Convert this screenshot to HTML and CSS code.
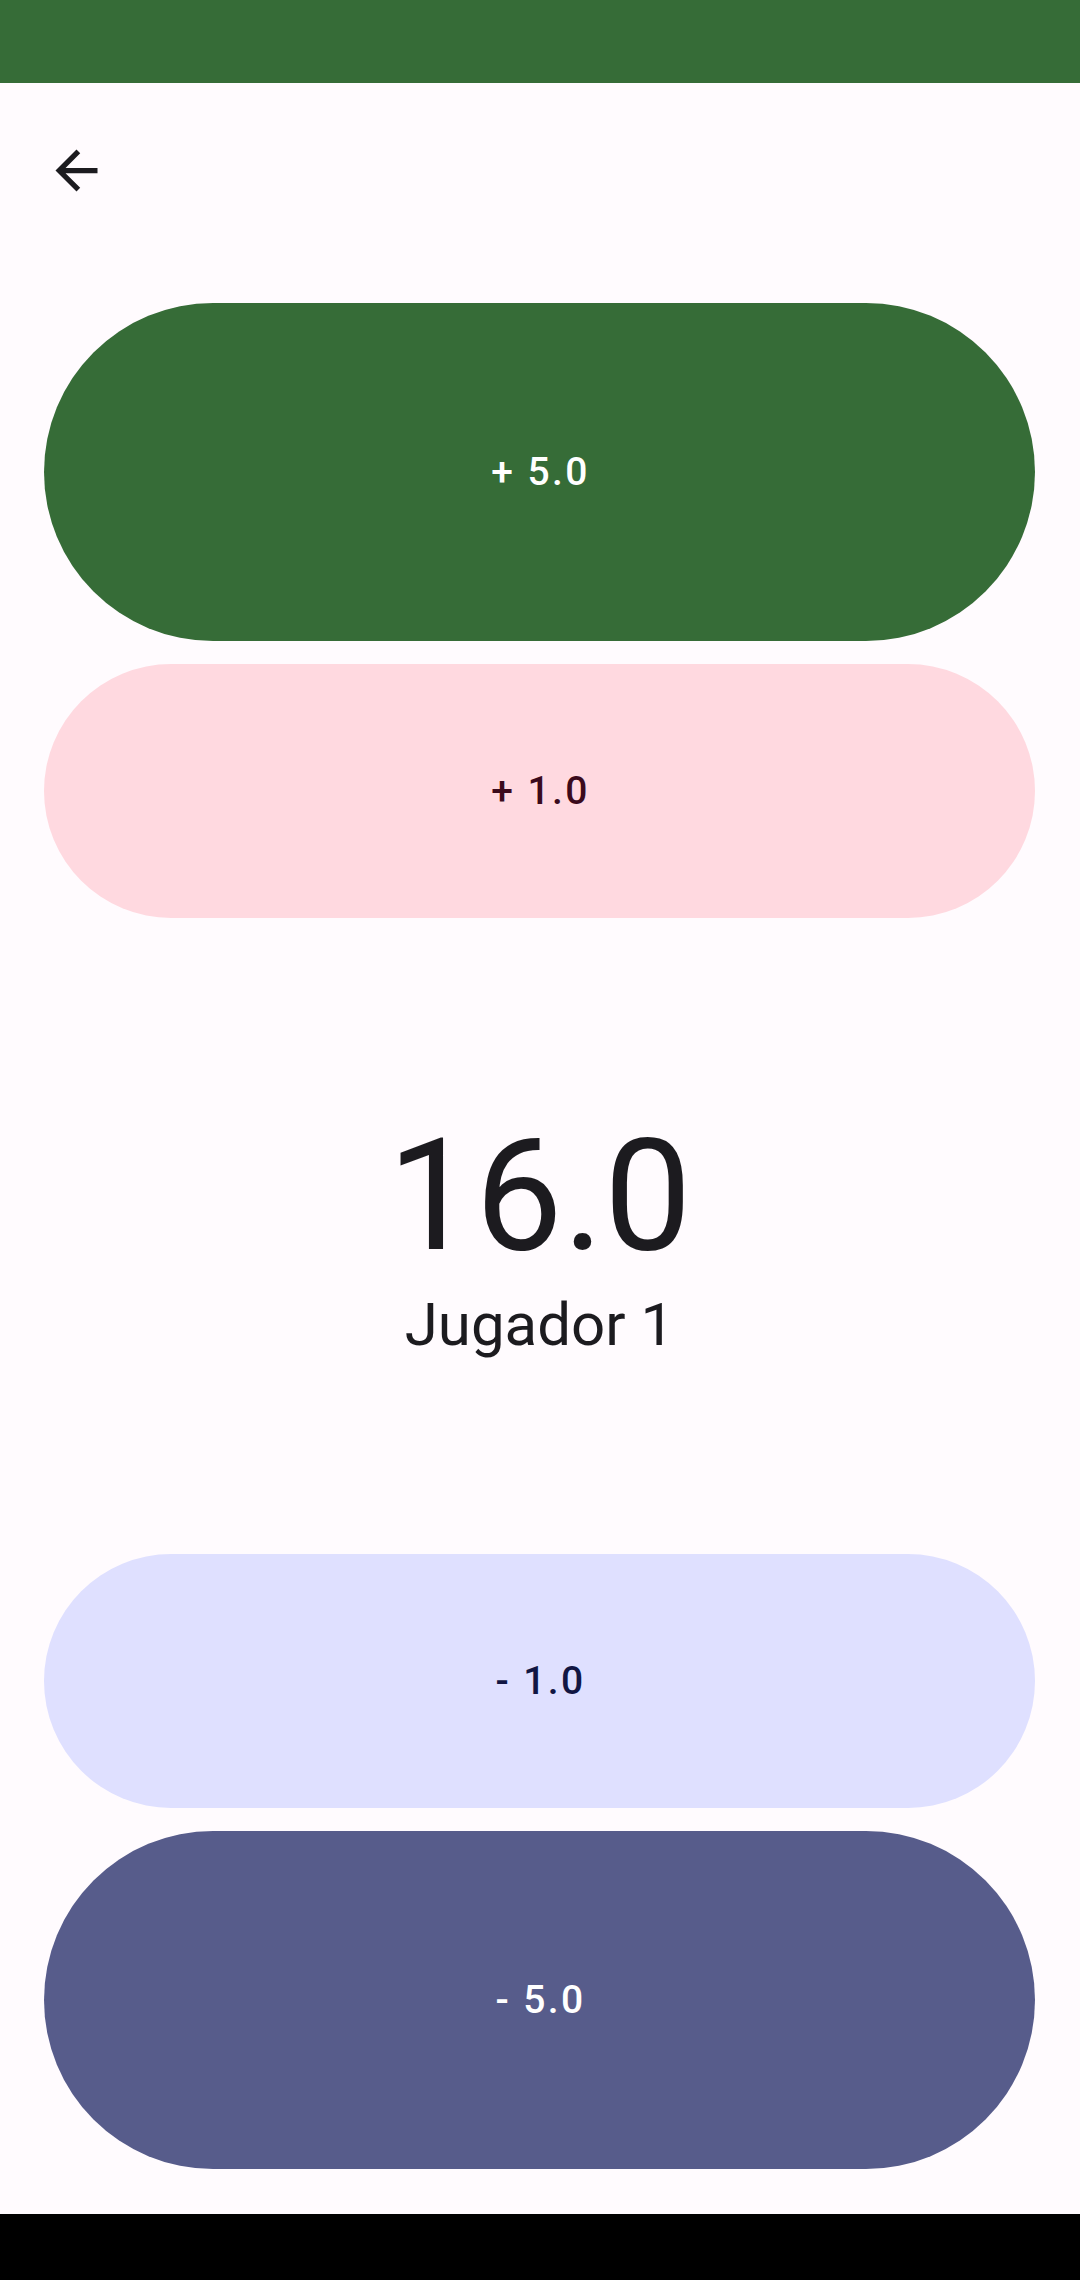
FILE: index.html
```html
<!DOCTYPE html>
<html lang="es">
<head>
<meta charset="utf-8">
<title>Jugador 1</title>
<link rel="stylesheet" href="styles.css">
</head>
<body>
<div class="screen">
  <div class="status"></div>
  <div class="topbar">
    <svg class="back" viewBox="0 0 24 24" width="63" height="63"><path d="M20 11H7.83l5.59-5.59L12 4l-8 8 8 8 1.41-1.41L7.83 13H20v-2z" fill="#1c1b1f"/></svg>
  </div>
  <main class="content">
    <button class="btn big primary">+ 5.0</button>
    <button class="btn small pink">+ 1.0</button>
    <section class="score">
      <div class="value">16.0</div>
      <div class="name">Jugador 1</div>
    </section>
    <button class="btn small lavender">- 1.0</button>
    <button class="btn big indigo">- 5.0</button>
  </main>
  <div class="spacer"></div>
  <div class="navbar"></div>
</div>
</body>
</html>
```
FILE: styles.css
```css
html, body {
  margin: 0;
  padding: 0;
  background: #fffbfe;
}
.screen {
  width: 1080px;
  height: 2280px;
  display: flex;
  flex-direction: column;
  font-family: Roboto, "Noto Sans", sans-serif;
  color: #1c1b1f;
}
.status {
  height: 83px;
  background: #366c37;
  flex: none;
}
.topbar {
  height: 220px;
  flex: none;
  box-sizing: border-box;
  padding: 56px 0 0 45px;
}
.back {
  display: block;
}
.content {
  display: flex;
  flex-direction: column;
  padding: 0 45px 0 44px;
}
.btn {
  border: none;
  width: 100%;
  display: flex;
  align-items: center;
  justify-content: center;
  font-family: Roboto, sans-serif;
  font-weight: 500;
  font-size: 39px;
  letter-spacing: 2.4px;
  padding: 0 0 0 2px;
}
.big {
  height: 338px;
  border-radius: 169px;
}
.small {
  height: 254px;
  border-radius: 127px;
}
.primary {
  background: #366c37;
  color: #ffffff;
}
.pink {
  background: #ffd9e0;
  color: #3b0a1c;
  margin-top: 23px;
}
.lavender {
  background: #dfe0ff;
  color: #111643;
}
.indigo {
  background: #575c8b;
  color: #ffffff;
  margin-top: 23px;
}
.score {
  height: 636px;
  display: flex;
  flex-direction: column;
  align-items: center;
  justify-content: center;
  gap: 21px;
}
.value {
  font-size: 156px;
  line-height: 1;
  font-weight: 400;
}
.name {
  font-size: 60px;
  line-height: 1;
  font-weight: 400;
}
.spacer {
  flex: 1;
}
.navbar {
  height: 66px;
  background: #000;
  flex: none;
}
```
